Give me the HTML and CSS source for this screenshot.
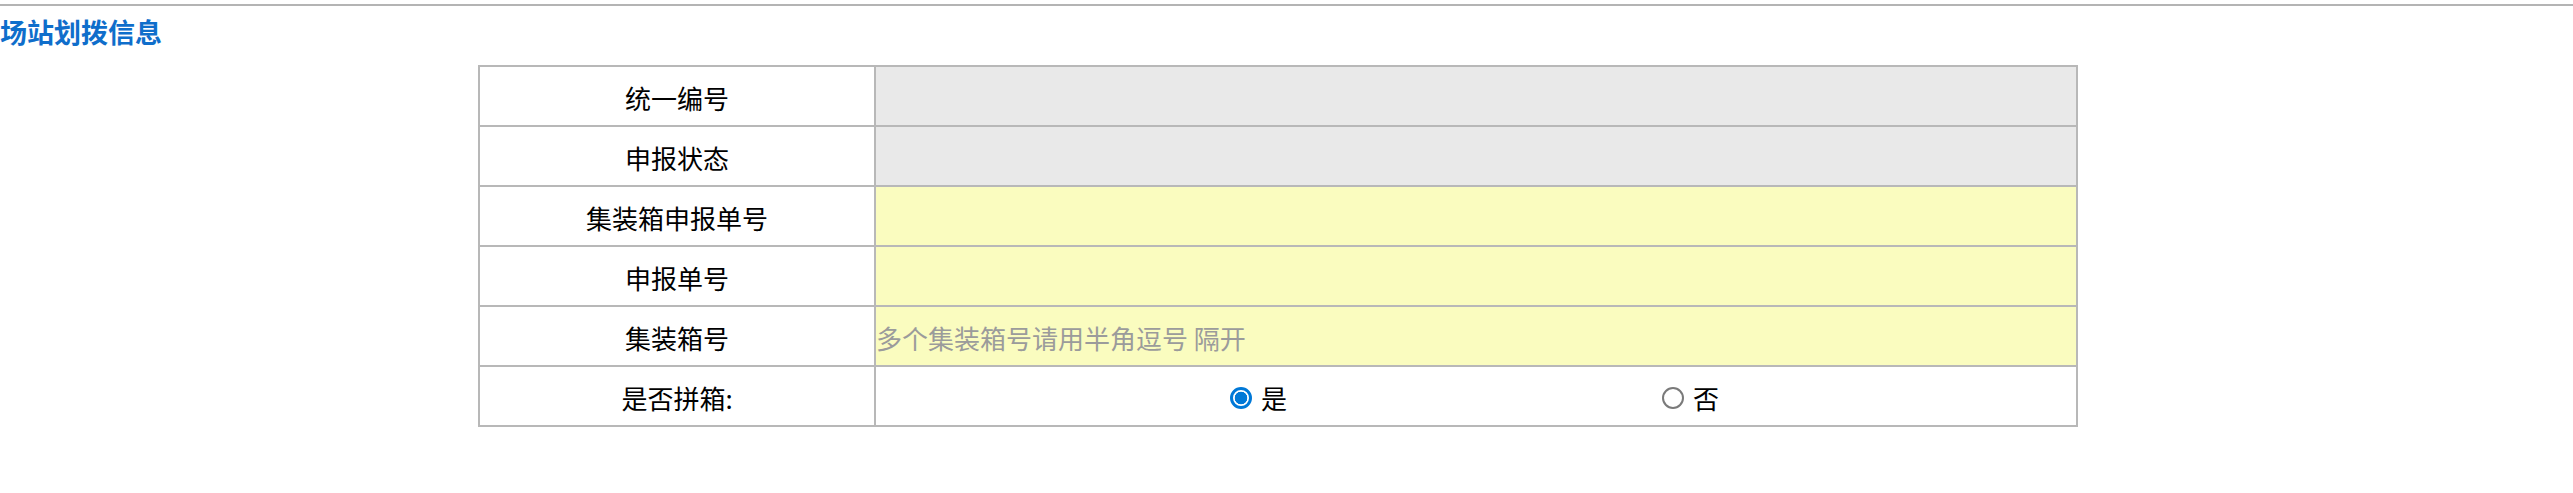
FILE: index.html
```html
<!DOCTYPE html>
<html lang="zh-CN">
<head>
<meta charset="utf-8">
<title>场站划拨信息</title>
<link rel="stylesheet" href="styles.css">
</head>
<body>
<div class="topline"></div>
<h2 class="title">场站划拨信息</h2>
<table class="form-table">
  <colgroup>
    <col class="col-label">
    <col class="col-value">
  </colgroup>
  <tr>
    <td class="label">统一编号</td>
    <td class="value"><input class="field readonly" type="text" readonly></td>
  </tr>
  <tr>
    <td class="label">申报状态</td>
    <td class="value"><input class="field readonly" type="text" readonly></td>
  </tr>
  <tr>
    <td class="label">集装箱申报单号</td>
    <td class="value"><input class="field required" type="text"></td>
  </tr>
  <tr>
    <td class="label">申报单号</td>
    <td class="value"><input class="field required" type="text"></td>
  </tr>
  <tr>
    <td class="label">集装箱号</td>
    <td class="value"><input class="field required" type="text" placeholder="多个集装箱号请用半角逗号 隔开"></td>
  </tr>
  <tr>
    <td class="label">是否拼箱:</td>
    <td class="value">
      <div class="radios">
        <label class="radio-item"><input type="radio" name="lcl" checked><span>是</span></label>
        <label class="radio-item second"><input type="radio" name="lcl"><span>否</span></label>
      </div>
    </td>
  </tr>
</table>
</body>
</html>
```

FILE: styles.css
```css
html, body {
  margin: 0;
  padding: 0;
  background: #ffffff;
}

body {
  font-family: "Noto Sans CJK SC", "Noto Sans", sans-serif;
  color: #000000;
}

.topline {
  height: 2px;
  margin-top: 4px;
  background: #b4b4b4;
}

.title {
  margin: 7px 0 0 0;
  font-size: 27px;
  font-weight: bold;
  color: #0f6ecb;
  line-height: 38px;
}

.form-table {
  margin: 14px 0 0 478px;
  width: 1600px;
  border-collapse: collapse;
  table-layout: fixed;
}

.col-label {
  width: 396px;
}

.form-table td {
  border: 2px solid #b8b8b8;
  height: 58px;
  padding: 0;
  font-size: 26px;
}

.label {
  text-align: center;
  padding-top: 3px !important;
  box-sizing: border-box;
}

.value {
  vertical-align: middle;
}

.field {
  display: block;
  width: 100%;
  height: 58px;
  box-sizing: border-box;
  border: none;
  margin: 0;
  padding: 3px 0 0 0;
  outline: none;
  font-family: "Noto Sans CJK SC", "Noto Sans", sans-serif;
  font-size: 26px;
  color: #000000;
}

.field::placeholder {
  color: #9b9b9b;
}

.readonly {
  background: #e9e9e9;
}

.required {
  background: #fafcbf;
}

.radios {
  display: flex;
  align-items: center;
  padding-left: 354px;
  padding-top: 3px;
}

.radio-item {
  display: flex;
  align-items: center;
}

.radio-item input {
  -webkit-appearance: none;
  appearance: none;
  width: 22px;
  height: 22px;
  margin: 0 9px 0 0;
  box-sizing: border-box;
  border: 2px solid #7a7a7a;
  border-radius: 50%;
  background: #ffffff;
}

.radio-item input:checked {
  border: 3px solid #0078d7;
  background: radial-gradient(circle, #0078d7 0 6px, #ffffff 6.6px);
}

.radio-item.second {
  margin-left: 375px;
}
```
